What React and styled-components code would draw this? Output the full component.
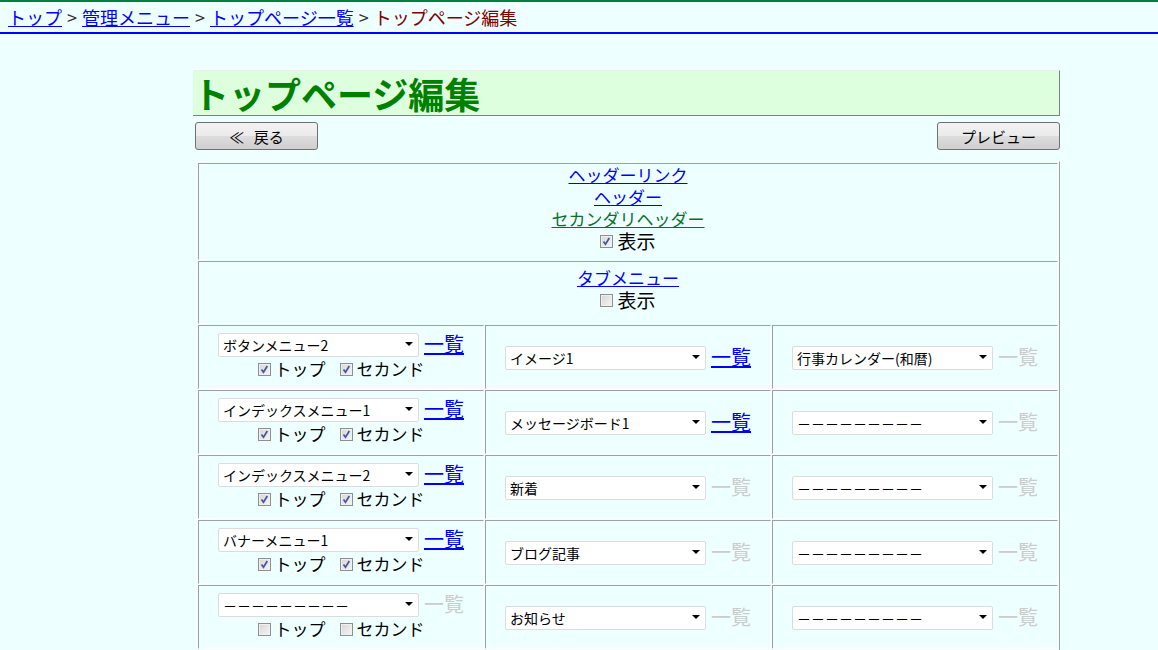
import styled, { createGlobalStyle } from "styled-components";

const DASH = "－－－－－－－－－";

const rows = [
  {
    menu: { label: "ボタンメニュー2", link: true, top: true, second: true },
    middle: { label: "イメージ1", link: true },
    right: { label: "行事カレンダー(和暦)", link: false },
  },
  {
    menu: { label: "インデックスメニュー1", link: true, top: true, second: true },
    middle: { label: "メッセージボード1", link: true },
    right: { label: DASH, link: false },
  },
  {
    menu: { label: "インデックスメニュー2", link: true, top: true, second: true },
    middle: { label: "新着", link: false },
    right: { label: DASH, link: false },
  },
  {
    menu: { label: "バナーメニュー1", link: true, top: true, second: true },
    middle: { label: "ブログ記事", link: false },
    right: { label: DASH, link: false },
  },
  {
    menu: { label: DASH, link: false, top: false, second: false },
    middle: { label: "お知らせ", link: false },
    right: { label: DASH, link: false },
  },
];

const GlobalStyle = createGlobalStyle`
  body {
    margin: 0;
    background: #eeffff;
    color: #000;
    font-family: "Noto Sans CJK JP", "Noto Sans", sans-serif;
  }
`;

const Crumbs = styled.nav`
  display: flex;
  align-items: center;
  height: 30px;
  padding: 0 8px;
  border-top: 2px solid #008040;
  border-bottom: 2px solid #0000ff;
  font-size: 18px;
  white-space: nowrap;
`;

const CrumbLink = styled.a`
  color: #0000ff;
  text-decoration: underline;
`;

const Sep = styled.span`
  margin: 0 5px;
  color: #333;
`;

const Current = styled.span`
  color: #800000;
`;

const Main = styled.main`
  width: 867px;
  padding: 36px 0 20px 193px;
`;

const Title = styled.h1`
  margin: 0;
  height: 44px;
  line-height: 44px;
  background: #ddffdd;
  color: #008000;
  font-size: 36px;
  font-weight: bold;
  border-top: 1px solid #eeeeee;
  border-right: 1px solid #808080;
  border-bottom: 1px solid #808080;
  white-space: nowrap;
`;

const ButtonBar = styled.div`
  display: flex;
  justify-content: space-between;
  margin-top: 6px;
  padding-left: 2px;
`;

const Button = styled.button`
  width: 123px;
  height: 28px;
  padding: 0;
  border: 1px solid #707070;
  border-radius: 3px;
  background: linear-gradient(#f2f2f2 0%, #ebebeb 50%, #dddddd 50%, #cfcfcf 100%);
  color: #000;
  font-family: "Noto Sans CJK JP", sans-serif;
  font-size: 15px;
  word-spacing: 6px;
`;

const Table = styled.table`
  width: 864px;
  margin: 11px 0 0 3px;
  table-layout: fixed;
  border-collapse: separate;
  border-spacing: 1px;
  border: 1px solid;
  border-color: #ffffff #a0a0a0 #a0a0a0 #ffffff;
`;

const Cell = styled.td`
  padding: ${(p) => p.$pad || "0"};
  border: 1px solid;
  border-color: #a0a0a0 #ffffff #ffffff #a0a0a0;
  text-align: center;
  vertical-align: ${(p) => (p.$top ? "top" : "middle")};
`;

const Stack = styled.div`
  font-size: 17px;
  line-height: 22px;
`;

const StackLink = styled.a`
  color: ${(p) => p.$color || "#0000ff"};
  text-decoration: underline;
`;

const Toggle = styled.label`
  display: inline-flex;
  align-items: center;
  gap: 4px;
  height: 22px;
  font-size: 19px;
  line-height: 22px;
  vertical-align: top;
`;

const SelectRow = styled.div`
  display: flex;
  justify-content: center;
  align-items: center;
  gap: 5px;
  height: 24px;
`;

const SelectWrap = styled.span`
  position: relative;
  display: inline-block;
  width: 201px;
  height: 24px;

  &::after {
    content: "";
    position: absolute;
    right: 6px;
    top: 10px;
    border-left: 4px solid transparent;
    border-right: 4px solid transparent;
    border-top: 4px solid #000;
    pointer-events: none;
  }
`;

const Select = styled.select`
  appearance: none;
  width: 100%;
  height: 100%;
  padding: 0 4px;
  border: 1px solid #dcdcdc;
  border-radius: 2px;
  background: #fff;
  color: #000;
  font-family: "Noto Sans CJK JP", sans-serif;
  font-size: 14px;
`;

const ListLink = styled.a`
  font-size: 20px;
  line-height: 24px;
  color: ${(p) => (p.$off ? "#cccccc" : "#0000ff")};
  text-decoration: ${(p) => (p.$off ? "none" : "underline")};
  white-space: nowrap;
`;

const ChecksRow = styled.div`
  display: flex;
  justify-content: center;
  gap: 14px;
  margin-top: 2px;
  font-size: 17px;
  line-height: 22px;
`;

const CheckLabel = styled.label`
  display: inline-flex;
  align-items: center;
  gap: 4px;
`;

const Box = styled.span`
  display: inline-flex;
  align-items: center;
  justify-content: center;
  box-sizing: border-box;
  width: 13px;
  height: 13px;
  border: 1px solid #8f8f8f;
  background: linear-gradient(135deg, #d6d6d6, #f6f6f6);
  box-shadow: inset 0 0 0 1px #f0f0f0;
`;

const CheckBox = ({ checked }) => (
  <Box>
    {checked && (
      <svg width="11" height="11" viewBox="0 0 11 11">
        <path d="M2.5 5.5 L4.5 8.2 L8.3 2" stroke="#42579e" strokeWidth="1.7" fill="none" />
      </svg>
    )}
  </Box>
);

const Picker = ({ label, link }) => (
  <SelectRow>
    <SelectWrap>
      <Select defaultValue={label}>
        <option>{label}</option>
      </Select>
    </SelectWrap>
    <ListLink href={link ? "#" : undefined} $off={!link}>
      一覧
    </ListLink>
  </SelectRow>
);

const App = () => {
  return (
    <>
      <GlobalStyle />
      <Crumbs>
        <CrumbLink href="#">トップ</CrumbLink>
        <Sep>&gt;</Sep>
        <CrumbLink href="#">管理メニュー</CrumbLink>
        <Sep>&gt;</Sep>
        <CrumbLink href="#">トップページ一覧</CrumbLink>
        <Sep>&gt;</Sep>
        <Current>トップページ編集</Current>
      </Crumbs>
      <Main>
        <Title>トップページ編集</Title>
        <ButtonBar>
          <Button>≪ 戻る</Button>
          <Button>プレビュー</Button>
        </ButtonBar>
        <Table>
          <tbody>
            <tr>
              <Cell colSpan={3} $top $pad="0 0 7px">
                <Stack>
                  <StackLink href="#">ヘッダーリンク</StackLink>
                  <br />
                  <StackLink href="#">ヘッダー</StackLink>
                  <br />
                  <StackLink href="#" $color="#0a6e2c">
                    セカンダリヘッダー
                  </StackLink>
                  <br />
                  <Toggle>
                    <CheckBox checked />
                    表示
                  </Toggle>
                </Stack>
              </Cell>
            </tr>
            <tr>
              <Cell colSpan={3} $top $pad="5px 0 12px">
                <Stack>
                  <StackLink href="#">タブメニュー</StackLink>
                  <br />
                  <Toggle>
                    <CheckBox />
                    表示
                  </Toggle>
                </Stack>
              </Cell>
            </tr>
            {rows.map((row, i) => (
              <tr key={i}>
                <Cell $top $pad="6px 0 8px">
                  <Picker label={row.menu.label} link={row.menu.link} />
                  <ChecksRow>
                    <CheckLabel>
                      <CheckBox checked={row.menu.top} />
                      トップ
                    </CheckLabel>
                    <CheckLabel>
                      <CheckBox checked={row.menu.second} />
                      セカンド
                    </CheckLabel>
                  </ChecksRow>
                </Cell>
                <Cell>
                  <Picker label={row.middle.label} link={row.middle.link} />
                </Cell>
                <Cell>
                  <Picker label={row.right.label} link={row.right.link} />
                </Cell>
              </tr>
            ))}
          </tbody>
        </Table>
      </Main>
    </>
  );
};

export default App;
